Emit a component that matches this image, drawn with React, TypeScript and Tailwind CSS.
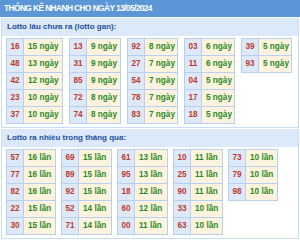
import React from "react";

type Row = [string, string];

const gan: Row[][] = [
  [["16", "15"], ["48", "13"], ["42", "12"], ["23", "10"], ["37", "10"]],
  [["13", "9"], ["31", "9"], ["85", "9"], ["72", "8"], ["74", "8"]],
  [["92", "8"], ["27", "7"], ["54", "7"], ["78", "7"], ["83", "7"]],
  [["03", "6"], ["11", "6"], ["04", "5"], ["17", "5"], ["18", "5"]],
  [["39", "5"], ["93", "5"]],
];
const ganW = ["w-[57px]", "w-[52px]", "w-[51px]", "w-[51px]", "w-[51px]"];

const nhieu: Row[][] = [
  [["57", "16"], ["77", "16"], ["82", "16"], ["22", "15"], ["30", "15"]],
  [["69", "15"], ["89", "15"], ["92", "15"], ["52", "14"], ["71", "14"]],
  [["61", "13"], ["95", "13"], ["18", "12"], ["60", "12"], ["00", "11"]],
  [["10", "11"], ["25", "11"], ["90", "11"], ["33", "10"], ["63", "10"]],
  [["73", "10"], ["79", "10"], ["98", "10"]],
];
const nhieuW = ["w-[50px]", "w-[51px]", "w-[51px]", "w-[50px]", "w-[50px]"];

function Table({ rows, unit, w }: { rows: Row[]; unit: string; w: string }) {
  return (
    <table className={`border-collapse table-fixed self-start shrink-0 whitespace-nowrap ${w}`}>
      <tbody>
        {rows.map(([n, v], i) => (
          <tr key={i} className="h-[17px]">
            <td className="w-[17px] border border-[#b9cff0] bg-[#dde9f9] text-center text-[#c0392b]">
              {n}
            </td>
            <td className="border border-[#b9cff0] bg-[#fdf3de] pl-[4px] text-left text-[#2a8a1e]">
              {v} {unit}
            </td>
          </tr>
        ))}
      </tbody>
    </table>
  );
}

export default function App() {
  return (
    <div
      className="w-[300px] h-[240px] bg-white overflow-hidden"
      style={{ fontFamily: '"Liberation Sans", Arial, sans-serif' }}
    >
      <div className="h-[17px] bg-[#5b97d6] pl-[4px] flex items-center text-white text-[8.4px] tracking-[-0.6px] font-bold whitespace-nowrap">
        THỐNG KÊ NHANH CHO NGÀY 13/05/2024
      </div>
      <div className="border-x border-b border-[#c9dcf5] mx-[1px]">
        <div className="mt-[1px] h-[18px] bg-[#dbe9fb] pl-[5px] flex items-center text-[#1f4f9e] text-[8px] font-bold">
          Lotto lâu chưa ra (lotto gan):
        </div>
        <div className="flex gap-[6px] pl-[4px] pt-[2px] pb-[3px] text-[8.2px] font-bold leading-none">
          {gan.map((t, i) => (
            <Table key={i} rows={t} unit="ngày" w={ganW[i]} />
          ))}
        </div>
      </div>
      <div className="border-x border-b border-[#c9dcf5] mx-[1px] mt-[1px]">
        <div className="h-[18px] bg-[#dbe9fb] pl-[5px] flex items-center text-[#1f4f9e] text-[8px] font-bold">
          Lotto ra nhiều trong tháng qua:
        </div>
        <div className="flex gap-[5px] pl-[4px] pt-[2px] pb-[3px] text-[8.2px] font-bold leading-none">
          {nhieu.map((t, i) => (
            <Table key={i} rows={t} unit="lần" w={nhieuW[i]} />
          ))}
        </div>
      </div>
    </div>
  );
}
